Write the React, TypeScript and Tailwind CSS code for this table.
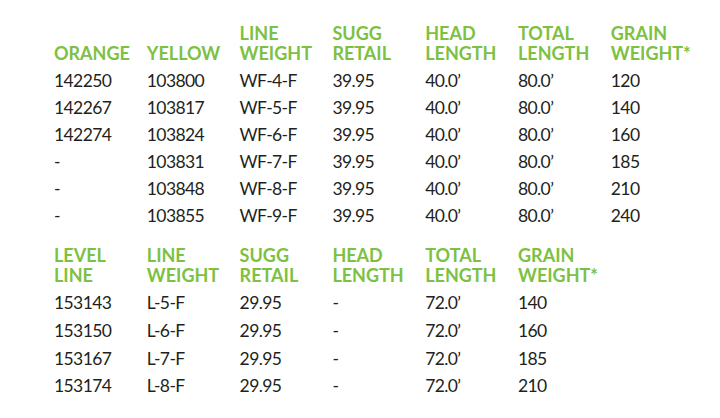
const fishLines = [
  ['142250', '103800', 'WF-4-F', '39.95', '40.0’', '80.0’', '120'],
  ['142267', '103817', 'WF-5-F', '39.95', '40.0’', '80.0’', '140'],
  ['142274', '103824', 'WF-6-F', '39.95', '40.0’', '80.0’', '160'],
  ['-', '103831', 'WF-7-F', '39.95', '40.0’', '80.0’', '185'],
  ['-', '103848', 'WF-8-F', '39.95', '40.0’', '80.0’', '210'],
  ['-', '103855', 'WF-9-F', '39.95', '40.0’', '80.0’', '240'],
];

const levelLines = [
  ['153143', 'L-5-F', '29.95', '-', '72.0’', '140'],
  ['153150', 'L-6-F', '29.95', '-', '72.0’', '160'],
  ['153167', 'L-7-F', '29.95', '-', '72.0’', '185'],
  ['153174', 'L-8-F', '29.95', '-', '72.0’', '210'],
];

const fishHeads = [
  ['', 'ORANGE'],
  ['', 'YELLOW'],
  ['LINE', 'WEIGHT'],
  ['SUGG', 'RETAIL'],
  ['HEAD', 'LENGTH'],
  ['TOTAL', 'LENGTH'],
  ['GRAIN', 'WEIGHT*'],
];

const levelHeads = [
  ['LEVEL', 'LINE'],
  ['LINE', 'WEIGHT'],
  ['SUGG', 'RETAIL'],
  ['HEAD', 'LENGTH'],
  ['TOTAL', 'LENGTH'],
  ['GRAIN', 'WEIGHT*'],
];

function SpecTable({ heads, rows, rowClass }: { heads: string[][]; rows: string[][]; rowClass: string }) {
  return (
    <div className="grid grid-cols-[repeat(7,92.8px)]">
      {heads.map(([top, bottom], i) => (
        <div key={i} className="font-bold text-[18px] text-[#7cc142] leading-[20px] mb-1">
          <div className="h-[20px]">{top}</div>
          <div>{bottom}</div>
        </div>
      ))}
      {heads.length < 7 && <div />}
      {rows.map((row, r) => (
        <div key={r} className="contents">
          {row.map((cell, c) => (
            <div key={c} className={`${rowClass} tracking-[-0.6px] text-[#231f20]`}>
              {cell}
            </div>
          ))}
          {row.length < 7 && <div />}
        </div>
      ))}
    </div>
  );
}

export default function App() {
  return (
    <div className="w-[720px] h-[418px] bg-white pl-[54px] pt-[23px] font-['Lato',sans-serif] text-[17.5px] overflow-hidden">
      <SpecTable heads={fishHeads} rows={fishLines} rowClass="leading-[27px]" />
      <div className="h-[16px]" />
      <SpecTable heads={levelHeads} rows={levelLines} rowClass="leading-[27.8px]" />
    </div>
  );
}
